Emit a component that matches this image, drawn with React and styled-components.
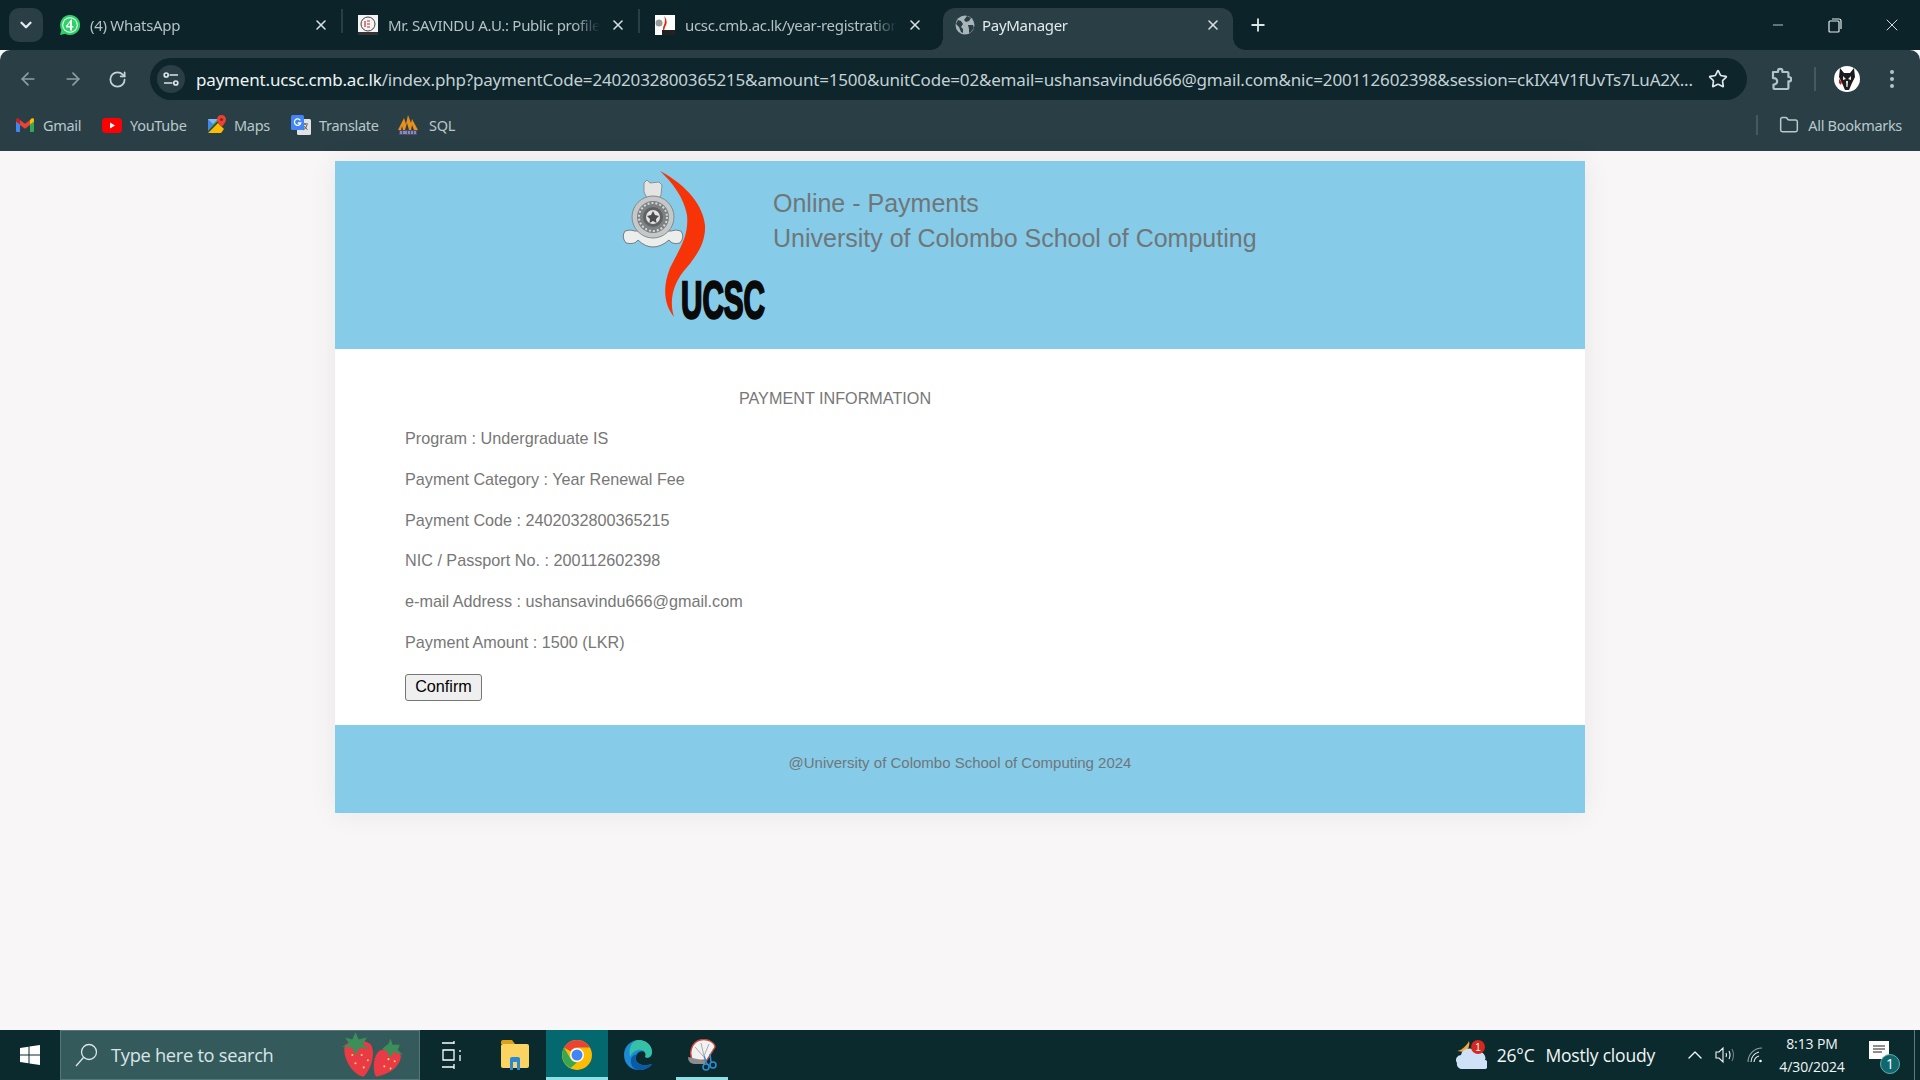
import React from "react";
import styled, { createGlobalStyle } from "styled-components";
import {
  ArrowLeft,
  ArrowRight,
  RotateCw,
  Star,
  Folder,
  X,
  Plus,
  ChevronDown,
  Minus,
  ChevronUp,
} from "lucide-react";

const GlobalStyle = createGlobalStyle`
  html, body { margin: 0; padding: 0; height: 100%; }
  body { background: #f8f6f7; overflow: hidden; }
  #root { height: 100%; }
`;

const uiFont = `"Noto Sans", "Open Sans", sans-serif`;
const pageFont = `"Liberation Sans", Arial, sans-serif`;

// ===== browser chrome =====
const Screen = styled.div`
  width: 1920px;
  height: 1080px;
  display: flex;
  flex-direction: column;
  font-family: ${pageFont};
`;

const TabStrip = styled.div`
  height: 50px;
  flex: none;
  background: #0b2329;
  display: flex;
  padding-left: 9px;
  color: #c4d0d3;
  font-family: ${uiFont};
`;

const TabMenu = styled.div`
  width: 34px;
  height: 34px;
  margin-top: 8px;
  border-radius: 10px;
  background: #2a3f45;
  color: #e6ecee;
  display: flex;
  align-items: center;
  justify-content: center;
`;

const Tabs = styled.div`
  display: flex;
  margin-left: 3px;
`;

const Tab = styled.div`
  position: relative;
  width: ${(p) => p.$w}px;
  height: 42px;
  margin-top: 8px;
  margin-left: ${(p) => p.$ml || 0}px;
  padding: 0 ${(p) => p.$pr}px 8px ${(p) => p.$pl}px;
  box-sizing: border-box;
  display: flex;
  align-items: center;
  border-radius: 12px 12px 0 0;
  background: ${(p) => (p.$active ? "#2a3f45" : "transparent")};
  color: ${(p) => (p.$active ? "#e3eaec" : "#b4c2c6")};
  &::after {
    content: "";
    display: ${(p) => (p.$sep ? "block" : "none")};
    position: absolute;
    right: 0;
    top: 1px;
    height: 24px;
    width: 2px;
    background: #2a3f45;
  }
`;

const TabFlare = styled.span`
  position: absolute;
  bottom: 0;
  ${(p) => (p.$side === "left" ? "left: -12px" : "right: -12px")};
  width: 12px;
  height: 12px;
  background: radial-gradient(
    circle at ${(p) => (p.$side === "left" ? "0 0" : "100% 0")},
    transparent 11.5px,
    #2a3f45 12px
  );
`;

const TabTitle = styled.span`
  flex: 1;
  margin-left: ${(p) => p.$gap}px;
  font-size: 15px;
  letter-spacing: -0.3px;
  white-space: nowrap;
  overflow: hidden;
  mask-image: linear-gradient(to right, #000 88%, transparent 100%);
`;

const TabClose = styled.span`
  width: 16px;
  margin-left: 10px;
  display: flex;
  justify-content: center;
  color: #d5dfe1;
`;

const NewTab = styled.div`
  width: 20px;
  margin: 8px 0 0 15px;
  height: 34px;
  display: flex;
  align-items: center;
  color: #dfe6e8;
`;

const WindowControls = styled.div`
  margin-left: auto;
  display: flex;
  align-items: center;
  height: 50px;
  color: #e8eeef;
`;

const WindowBtn = styled.div`
  width: 57px;
  display: flex;
  justify-content: center;
`;

const Toolbar = styled.div`
  height: 58px;
  flex: none;
  box-sizing: border-box;
  background: #2a3f45;
  border-radius: 10px 10px 0 0;
  display: flex;
  align-items: flex-start;
  padding: 8px 0 0 18px;
  font-family: ${uiFont};
`;

const NavBtn = styled.div`
  width: ${(p) => p.$w || 45}px;
  height: 42px;
  flex: none;
  display: flex;
  align-items: center;
  color: ${(p) => p.$color || "#8fa0a5"};
`;

const Omnibox = styled.div`
  width: 1597px;
  height: 42px;
  flex: none;
  background: #0e252b;
  border-radius: 21px;
  display: flex;
  align-items: center;
  padding-left: 7px;
  box-sizing: border-box;
`;

const SiteInfo = styled.div`
  width: 28px;
  height: 28px;
  border-radius: 50%;
  background: #2a3f45;
  flex: none;
  display: flex;
  align-items: center;
  justify-content: center;
`;

const Url = styled.div`
  margin-left: 11px;
  width: 1500px;
  font-size: 17px;
  letter-spacing: -0.18px;
  color: #c3d1d5;
  white-space: nowrap;
  b {
    font-weight: 400;
    color: #eef4f5;
  }
`;

const StarWrap = styled.div`
  margin-left: 12px;
  display: flex;
  color: #dfe6e8;
`;

const ToolGroup = styled.div`
  display: flex;
  align-items: center;
  height: 42px;
  margin-left: 21px;
  color: #b0c6cb;
`;

const VDivider = styled.div`
  width: 2px;
  height: ${(p) => p.$h}px;
  margin: 0 ${(p) => p.$mr || 0}px 0 ${(p) => p.$ml || 0}px;
  background: #46595f;
`;

const Avatar = styled.div`
  width: 26px;
  height: 26px;
  border-radius: 50%;
  background: #fff;
  display: flex;
  align-items: center;
  justify-content: center;
  overflow: hidden;
`;

const MoreDots = styled.div`
  display: flex;
  flex-direction: column;
  gap: 3px;
  margin-left: 30px;
  span {
    width: 4px;
    height: 4px;
    border-radius: 50%;
    background: #b0c6cb;
  }
`;

const BookmarksBar = styled.div`
  height: 43px;
  flex: none;
  background: #2a3f45;
  display: flex;
  align-items: flex-start;
  padding: 5px 18px 0 16px;
  box-sizing: border-box;
  font-family: ${uiFont};
  font-size: 14.5px;
  letter-spacing: -0.3px;
  color: #b9c8cc;
`;

const Bookmark = styled.div`
  width: ${(p) => p.$w}px;
  height: 24px;
  flex: none;
  display: flex;
  align-items: center;
  gap: ${(p) => p.$gap}px;
  span { line-height: 24px; }
`;

const AllBookmarks = styled.div`
  margin-left: auto;
  display: flex;
  align-items: center;
  height: 24px;
  gap: 9px;
`;

// ===== page =====
const Viewport = styled.main`
  flex: 1;
  min-height: 0;
  padding-top: 10px;
`;

const Card = styled.div`
  width: 1250px;
  margin: 0 auto;
  background: #fff;
  box-shadow: 0 0 28px rgba(0, 0, 0, 0.07);
`;

const Banner = styled.header`
  height: 188px;
  background: #86cce9;
  display: flex;
  padding-left: 285px;
  box-sizing: border-box;
`;

const BannerLogo = styled.svg`
  width: 150px;
  height: 160px;
  flex: none;
  margin-top: 7px;
`;

const BannerText = styled.div`
  margin: 25px 0 0 3px;
  font-size: 25px;
  line-height: 35px;
  color: #6f7679;
`;

const Content = styled.section`
  height: 376px;
  box-sizing: border-box;
  padding: 40px 0 0 70px;
  color: #777;
  font-size: 16.2px;
`;

const SectionTitle = styled.div`
  width: 860px;
  text-align: center;
  line-height: 18px;
`;

const InfoRow = styled.p`
  margin: 22.8px 0 0;
  line-height: 18px;
  &:first-of-type { margin-top: 22px; }
`;

const ConfirmButton = styled.button`
  display: block;
  width: 77px;
  height: 27px;
  margin-top: 23px;
  padding: 0 0 2px;
  font: 16.2px ${pageFont};
  color: #000;
  background: #efefef;
  border: 1px solid #767676;
  border-radius: 3px;
`;

const PageFooter = styled.footer`
  height: 88px;
  background: #86cce9;
  padding-top: 30px;
  box-sizing: border-box;
  text-align: center;
  font-size: 15px;
  line-height: 16px;
  color: #6f7679;
`;

// ===== windows taskbar =====
const Taskbar = styled.div`
  height: 50px;
  flex: none;
  background: #0a2a2e;
  display: flex;
  align-items: stretch;
  color: #f2f6f6;
  font-family: "Open Sans", "Noto Sans", sans-serif;
`;

const StartBtn = styled.div`
  width: 60px;
  display: flex;
  align-items: center;
  justify-content: center;
`;

const SearchBox = styled.div`
  width: 360px;
  box-sizing: border-box;
  background: #355a5c;
  border: 1px solid #55777a;
  display: flex;
  align-items: center;
  padding: 0 13px 0 13px;
  font-size: 18.3px;
  letter-spacing: -0.3px;
  color: #d8e6e8;
  overflow: hidden;
`;

const SearchText = styled.span`
  margin-left: 13px;
  margin-bottom: 1px;
  flex: 1;
`;

const TaskIcon = styled.div`
  width: ${(p) => p.$w || 62}px;
  margin-left: ${(p) => p.$ml || 0}px;
  flex: none;
  display: flex;
  align-items: center;
  justify-content: center;
  box-sizing: border-box;
  background: ${(p) => (p.$focus ? "#03696f" : "transparent")};
  border-bottom: ${(p) => (p.$open ? "3px solid #8fdfe6" : "0")};
  padding-top: ${(p) => (p.$open ? "3px" : "0")};
`;

const Tray = styled.div`
  margin-left: auto;
  display: flex;
  align-items: center;
  padding-right: 5px;
`;

const Weather = styled.div`
  display: flex;
  align-items: center;
  font-size: 17.5px;
  letter-spacing: -0.2px;
  span { margin-left: 10px; }
  span + span { margin-left: 11px; }
`;

const TrayIcons = styled.div`
  display: flex;
  align-items: center;
  gap: 12px;
  margin-left: 28px;
`;

const TrayChevron = styled(ChevronUp)`
  margin-right: -4px;
`;

const Clock = styled.div`
  width: 70px;
  margin-left: 14px;
  text-align: center;
  font-size: 14px;
  line-height: 23px;
  letter-spacing: -0.1px;
`;

const Notify = styled.div`
  position: relative;
  width: 30px;
  height: 30px;
  margin: 2px 0 0 22px;
`;

const NotifyBadge = styled.span`
  position: absolute;
  right: -1px;
  bottom: -3px;
  width: 20px;
  height: 20px;
  border-radius: 50%;
  background: #10686f;
  border: 1px solid #6aa;
  box-sizing: border-box;
  font-size: 14px;
  line-height: 18px;
  text-align: center;
  color: #fff;
`;

const ShowDesktop = styled.div`
  width: 1px;
  height: 50px;
  margin-left: 15px;
  background: #5d7a7c;
`;

// ===== drawings =====
const WhatsappIcon = () => (
  <svg width="20" height="20" viewBox="0 0 20 20">
    <path d="M10 0a10 10 0 0 0-8.600 15L0 20l5.200-1.300A10 10 0 1 0 10 0z" fill="#2bd366" />
    <circle cx="10" cy="10" r="7.800" fill="#fff" />
    <circle cx="10" cy="10" r="6.800" fill="#2bd366" />
    <path d="M11 4.500l-5 6.500v1.500h4V15.500h2v-3h1.300V11H12V4.500zM10 7.500V11H7.600z" fill="#fff" fillRule="evenodd" />
  </svg>
);

const ProfileFavicon = () => (
  <svg width="20" height="20" viewBox="0 0 20 20">
    <rect width="20" height="20" fill="#f4f4f4" />
    <circle cx="10" cy="9" r="7" fill="none" stroke="#444" strokeWidth="1" />
    <path d="M7 6v6M9 6h3M9 9h3M9 12h3" stroke="#b33" strokeWidth="1.200" />
    <rect y="17" width="20" height="3" fill="#333" />
  </svg>
);

const UcscFavicon = () => (
  <svg width="20" height="20" viewBox="0 0 20 20">
    <rect width="20" height="20" fill="#fff" />
    <circle cx="4" cy="8" r="3.500" fill="#999" />
    <path d="M9 1q4 4 2 9q-2 3-2 9q-2-6 0-9q2-5 0-9z" fill="#e3260c" />
    <rect x="7" y="15" width="13" height="5" fill="#222" />
  </svg>
);

const GlobeIcon = () => (
  <svg width="20" height="20" viewBox="0 0 20 20">
    <circle cx="10" cy="10" r="9.500" fill="#a9b5b8" />
    <path d="M3 5l3 1 2 3-2 3 2 2v4l-2-1-2-5-3-3zM12 1l4 2-2 3-3 1-2-2zM13 10l5 0 1 3-3 4-2 1 0-4z" fill="#2a3f45" />
  </svg>
);

const TuneIcon = () => (
  <svg width="18" height="18" viewBox="0 0 18 18" fill="none" stroke="#dbe4e6" strokeWidth="1.700">
    <path d="M7.500 5H16M2 13h8.500" />
    <circle cx="4.200" cy="5" r="2" />
    <circle cx="13.800" cy="13" r="2" />
  </svg>
);

const PuzzleIcon = () => (
  <svg width="24" height="24" viewBox="0 0 24 24" fill="none" stroke="currentColor" strokeWidth="2.200" strokeLinejoin="round">
    <path d="M5 5h5V4a2.200 2.200 0 0 1 4.400 0v1h5a1 1 0 0 1 1 1v4h.6a2.200 2.200 0 0 1 0 4.400H20.400V21a1 1 0 0 1-1 1H6.500a1 1 0 0 1-1-1v-3.500h.5a3.200 3.200 0 0 0 0-6.400H5z" />
  </svg>
);

const GmailIcon = () => (
  <svg width="18" height="14" viewBox="0 0 18 14">
    <path d="M0 2.500V13a1 1 0 0 0 1 1h3V6z" fill="#4285f4" />
    <path d="M14 6v8h3a1 1 0 0 0 1-1V2.500z" fill="#34a853" />
    <path d="M0 1.500v2L4 6.500V2L2.500.6C1.500-.2 0 .3 0 1.500z" fill="#c5221f" />
    <path d="M4 2v5l5 3.800L14 7V2L9 5.800z" fill="#ea4335" />
    <path d="M14 2v4.500l4-3v-2c0-1.200-1.500-1.700-2.500-.9z" fill="#fbbc04" />
  </svg>
);

const YoutubeIcon = () => (
  <svg width="20" height="15" viewBox="0 0 20 15">
    <rect width="20" height="15" rx="4" fill="#f00" />
    <path d="M8 4.500v6l5-3z" fill="#fff" />
  </svg>
);

const MapsIcon = () => (
  <svg width="18" height="20" viewBox="0 0 18 20">
    <path d="M0 4h12L0 16z" fill="#34a853" />
    <path d="M0 4l5 5-5 7z" fill="#4285f4" />
    <path d="M0 18L10 8l6 6-3 4z" fill="#fbbc04" />
    <path d="M0 4h10L5 9z" fill="#8ab4f8" />
    <path d="M13.500 0a4.500 4.500 0 0 0-4.500 4.500c0 3 4.500 7.500 4.500 7.500S18 7.500 18 4.500A4.500 4.500 0 0 0 13.500 0z" fill="#ea4335" />
    <circle cx="13.500" cy="4.500" r="1.600" fill="#a01c14" />
  </svg>
);

const TranslateIcon = () => (
  <svg width="20" height="20" viewBox="0 0 20 20">
    <rect x="6" y="4" width="14" height="16" rx="1.500" fill="#dfe3e6" />
    <path d="M11 9h6M14 8v2M12 15q3-1 4-5M12.500 10.500q2 3 4 4" stroke="#555" strokeWidth="1" fill="none" />
    <rect width="13" height="15" rx="1.500" fill="#4285f4" />
    <path d="M9.300 5.300A3.200 3.200 0 1 0 9.700 8H6.800" stroke="#fff" strokeWidth="1.300" fill="none" />
  </svg>
);

const SqlIcon = () => (
  <svg width="20" height="20" viewBox="0 0 20 20">
    <path d="M0 15L6 3l2 6 2-9 3 8 1-4 6 11h-4l-2-5-1 5h-2l-2-7-2 7H5l-1-4-1 4z" fill="#e98f1f" />
    <rect x="1" y="15" width="18" height="5" fill="#4b4b7a" />
    <path d="M3 16v3M6 16v3M8 16v3M11 16v3M14 16v3M17 16v3" stroke="#c9c9dd" strokeWidth="1" />
  </svg>
);

const WolfAvatar = () => (
  <svg width="26" height="26" viewBox="0 0 26 26">
    <path d="M6 2l4 5h6l4-5 1 9-3 6-3 7h-4l-3-7-3-6z" fill="#1c1c1e" />
    <path d="M9 10l3 3-3 1zM17 10l-3 3 3 1zM12 15h2l-.4 6h-1.200z" fill="#e8e8e8" />
    <path d="M5 13l3 3-1 3-2-2z" fill="#b3262a" />
  </svg>
);

const UcscLogo = () => (
  <BannerLogo viewBox="0 0 150 160">
    {/* crest */}
    <path d="M24 24l0-9 3-3 3 3 9-1 3 3-1 10-2 3H27z" fill="#e4e5e3" stroke="#858a8c" strokeWidth="0.900" />
    <path d="M5 63q-4 6 1 12 9 2 12-3 7 7 15 7t16-7q3 5 11 3 5-6 1-12-5-2-10 0H15q-5-2-10 0z" fill="#eceeeb" stroke="#777c7f" strokeWidth="1" />
    <circle cx="33" cy="49" r="21" fill="#c5c8c8" stroke="#858a8c" strokeWidth="1" />
    <circle cx="33" cy="49" r="16" fill="#7d8183" />
    <circle cx="33" cy="49" r="14" fill="none" stroke="#d6d8d8" strokeWidth="2" strokeDasharray="2 2" />
    <circle cx="33" cy="49" r="10" fill="#5e6264" />
    <circle cx="33" cy="49" r="7" fill="#e3e4e3" />
    <path d="M33 43l2 4 4 1-3 3 .5 4-3.500-2-3.500 2 .5-4-3-3 4-1z" fill="#494d4f" />
    {/* flame */}
    <path d="M40 3C68 18 83 38 85 57 86 76 75 90 63 104 53 117 49 133 54 149 43 135 43 118 50 100 60 80 69 68 67 47 64 30 53 15 40 3z" fill="#f63408" />
    <text x="61" y="150" fontFamily={pageFont} fontWeight="700" fontSize="52" textLength="84" lengthAdjust="spacingAndGlyphs" stroke="#0a0a0a" strokeWidth="2.400" fill="#0a0a0a">UCSC</text>
  </BannerLogo>
);

const WinLogo = () => (
  <svg width="20" height="20" viewBox="0 0 20 20" fill="#fff">
    <path d="M0 3l8.500-1.200v7.700H0zM9.500 1.600L20 0v9.500H9.500zM0 10.500h8.500v7.700L0 17zM9.500 10.500H20V20L9.500 18.400z" />
  </svg>
);

const SearchGlass = () => (
  <svg width="24" height="24" viewBox="0 0 24 24" fill="none" stroke="#d8e6e8" strokeWidth="1.300">
    <circle cx="15" cy="9" r="7.500" />
    <path d="M9.500 14.500L2 23" />
  </svg>
);

const Strawberries = () => (
  <svg width="66" height="46" viewBox="0 0 64 44">
    <path d="M5 12c8-5 24-5 26 2 3 9-1 22-8 29C13 42 1 24 5 12z" fill="#ea3a45" />
    <path d="M38 18c8-4 20-1 21 5 0 8-8 17-24 20-3-4-4-19 3-25z" fill="#ea3a45" />
    <path d="M2 14l7-3-4-6 7 2 3-7 3 7 8-2-4 7 7 4-10-1-4 7-3-7z" fill="#3d8f5a" />
    <path d="M41 16l6-5 2-5 2 6 7 0-2 5 5 5-9-3-4 6-2-6z" fill="#3d8f5a" />
    <g fill="#f3d65a">
      <circle cx="12" cy="22" r="1" /><circle cx="21" cy="22" r="1" /><circle cx="27" cy="27" r="1" />
      <circle cx="15" cy="30" r="1" /><circle cx="23" cy="34" r="1" /><circle cx="47" cy="26" r="1" />
      <circle cx="53" cy="28" r="1" /><circle cx="43" cy="33" r="1" /><circle cx="49" cy="35" r="1" />
    </g>
  </svg>
);

const TaskViewIcon = () => (
  <svg width="20" height="28" viewBox="0 0 20 28" fill="none" stroke="#fff" strokeWidth="1.300">
    <path d="M0 2h12M12 0v3M0 26h12M12 23v5M1 9h11v10H1zM18 9v2M18 14v6" />
  </svg>
);

const ExplorerIcon = () => (
  <svg width="28" height="30" viewBox="0 0 28 30">
    <path d="M0 2a2 2 0 0 1 2-2h9l3 4H0z" fill="#dba11b" />
    <rect y="4" width="28" height="24" rx="2" fill="#fcd462" />
    <path d="M9 30V19a2 2 0 0 1 2-2h6a2 2 0 0 1 2 2v11h-3v-8h-4v8z" fill="#2b88d8" />
  </svg>
);

const ChromeIcon = () => (
  <svg width="30" height="30" viewBox="0 0 30 30">
    <circle cx="15" cy="15" r="15" fill="#fbbc04" />
    <path d="M15 0a15 15 0 0 1 13 7.500H15a7.500 7.500 0 0 0-6.500 3.750L2 7.500A15 15 0 0 1 15 0z" fill="#ea4335" />
    <path d="M2 7.500l6.500 11.250A7.500 7.500 0 0 0 15 22.500L8.500 28A15 15 0 0 1 2 7.500z" fill="#34a853" />
    <circle cx="15" cy="15" r="7" fill="#fff" />
    <circle cx="15" cy="15" r="5.500" fill="#4285f4" />
  </svg>
);

const EdgeIcon = () => (
  <svg width="30" height="30" viewBox="0 0 30 30">
    <path d="M15 0C6 0 0 7 0 15c0 9 7 15 15 15 5 0 10-2 13-6-5 2-14 2-16-4-1-3 0-6 3-8 4-2 8 0 8 3 0 1-1 2-2 2 4 2 7-1 7-5C28 5 22 0 15 0z" fill="#1b8bd6" />
    <path d="M15 0C22 0 28 5 28 12c0 4-3 7-7 5 2-4-2-8-7-7-4 1-7 4-8 7C4 8 8 0 15 0z" fill="#35c1a5" />
    <path d="M12 20c2 6 11 6 16 4-3 4-8 6-13 6-6 0-9-6-8-11 1-3 4-5 6-4-2 1-2 3-1 5z" fill="#0c59a4" />
  </svg>
);

const SnipIcon = () => (
  <svg width="30" height="32" viewBox="0 0 30 32">
    <path d="M6 22C1 14 5 3 13 1c8-2 15 3 15 7L20 21z" fill="#f2f2f2" stroke="#d0453a" strokeWidth="1.400" />
    <path d="M1 18l18 4-1 3H7q-6-1-6-7z" fill="#8d8d8d" />
    <path d="M14 4l3 13M8 8l8 9M22 5l-5 12" stroke="#aaa" strokeWidth="1" />
    <path d="M17 17l3 8M23 15l1 8" stroke="#2c8fd6" strokeWidth="1.500" />
    <circle cx="19" cy="28" r="3" fill="none" stroke="#2c8fd6" strokeWidth="1.500" />
    <circle cx="26" cy="26" r="3" fill="none" stroke="#2c8fd6" strokeWidth="1.500" />
  </svg>
);

const WeatherIcon = () => (
  <svg width="32" height="30" viewBox="0 0 32 30">
    <path d="M14 1a9 9 0 0 1-5 11l-7-1c3 0 9-4 12-10z" fill="#f2a93b" />
    <path d="M2 23a5 5 0 0 1 4-8 8 8 0 0 1 15-2 6 6 0 0 1 9 7 4 4 0 0 1-2 9H6a5 5 0 0 1-4-6z" fill="#cfe1f7" />
    <circle cx="23" cy="7" r="7" fill="#d5281e" />
    <text x="23" y="11" fontSize="10" fill="#fff" textAnchor="middle" fontFamily={pageFont}>1</text>
  </svg>
);

const SpeakerIcon = () => (
  <svg width="20" height="18" viewBox="0 0 20 18" fill="none" stroke="#f2f6f6" strokeWidth="1.100">
    <path d="M1 6h3l4-4v14l-4-4H1zM11 7q1 2 0 4M14 5q2 4 0 8" />
    <path d="M17 3q3 6 0 12" stroke="#6b8385" />
  </svg>
);

const WifiIcon = () => (
  <svg width="16" height="16" viewBox="0 0 16 16" fill="none" stroke="#e8eeee" strokeWidth="1.100">
    <path d="M1 15A14 14 0 0 1 15 1" stroke="#8fa3a5" />
    <path d="M4 15A11 11 0 0 1 12 5" />
    <path d="M7 15A7 7 0 0 1 12 9" />
    <circle cx="13.500" cy="14" r="1.300" fill="#f2f6f6" stroke="none" />
  </svg>
);

const NotifyIcon = () => (
  <svg width="20" height="18" viewBox="0 0 20 18">
    <rect width="20" height="18" fill="#fff" />
    <path d="M4 5h12M4 8h12M4 11h9" stroke="#1c1c1c" strokeWidth="1" />
  </svg>
);

const RestoreIcon = () => (
  <svg width="14" height="15" viewBox="0 0 14 15" fill="none" stroke="currentColor" strokeWidth="1.200">
    <rect x="1" y="3" width="10" height="11" rx="1" />
    <path d="M4 1h7a2 2 0 0 1 2 2v8" />
  </svg>
);

const tabs = [
  { title: "(4) WhatsApp", icon: <WhatsappIcon />, pl: 14, sep: true },
  { title: "Mr. SAVINDU A.U.: Public profile", icon: <ProfileFavicon />, pl: 15, sep: true },
  { title: "ucsc.cmb.ac.lk/year-registration", icon: <UcscFavicon />, pl: 15 },
];

const bookmarks = [
  { label: "Gmail", icon: <GmailIcon />, w: 86, gap: 9 },
  { label: "YouTube", icon: <YoutubeIcon />, w: 106, gap: 8 },
  { label: "Maps", icon: <MapsIcon />, w: 83, gap: 8 },
  { label: "Translate", icon: <TranslateIcon />, w: 107, gap: 8 },
  { label: "SQL", icon: <SqlIcon />, w: 60, gap: 11 },
];

const info = [
  "Program : Undergraduate IS",
  "Payment Category : Year Renewal Fee",
  "Payment Code : 2402032800365215",
  "NIC / Passport No. : 200112602398",
  "e-mail Address : ushansavindu666@gmail.com",
  "Payment Amount : 1500 (LKR)",
];

const App = () => {
  return (
    <Screen>
      <GlobalStyle />
      <TabStrip>
        <TabMenu>
          <ChevronDown size={18} strokeWidth={3} />
        </TabMenu>
        <Tabs>
          {tabs.map((t) => (
            <Tab key={t.title} $w={297} $pl={t.pl} $pr={14} $sep={t.sep}>
              {t.icon}
              <TabTitle $gap={10}>{t.title}</TabTitle>
              <TabClose>
                <X size={16} strokeWidth={2.4} />
              </TabClose>
            </Tab>
          ))}
          <Tab $w={290} $pl={12} $pr={12} $ml={6} $active>
            <TabFlare $side="left" />
            <GlobeIcon />
            <TabTitle $gap={7}>PayManager</TabTitle>
            <TabClose>
              <X size={16} strokeWidth={2.4} />
            </TabClose>
            <TabFlare $side="right" />
          </Tab>
        </Tabs>
        <NewTab>
          <Plus size={20} strokeWidth={2.2} />
        </NewTab>
        <WindowControls>
          <WindowBtn>
            <Minus size={16} strokeWidth={1.2} />
          </WindowBtn>
          <WindowBtn>
            <RestoreIcon />
          </WindowBtn>
          <WindowBtn>
            <X size={20} strokeWidth={1.1} />
          </WindowBtn>
        </WindowControls>
      </TabStrip>

      <Toolbar>
        <NavBtn>
          <ArrowLeft size={20} strokeWidth={2} />
        </NavBtn>
        <NavBtn>
          <ArrowRight size={20} strokeWidth={2} />
        </NavBtn>
        <NavBtn $w={42} $color="#c6d4d8">
          <RotateCw size={19} strokeWidth={2.2} />
        </NavBtn>
        <Omnibox>
          <SiteInfo>
            <TuneIcon />
          </SiteInfo>
          <Url>
            <b>payment.ucsc.cmb.ac.lk</b>
            /index.php?paymentCode=2402032800365215&amp;amount=1500&amp;unitCode=02&amp;email=ushansavindu666@gmail.com&amp;nic=200112602398&amp;session=ckIX4V1fUvTs7LuA2X...
          </Url>
          <StarWrap>
            <Star size={20} strokeWidth={2} />
          </StarWrap>
        </Omnibox>
        <ToolGroup>
          <PuzzleIcon />
          <VDivider $h={24} $ml={22} $mr={18} />
          <Avatar>
            <WolfAvatar />
          </Avatar>
          <MoreDots>
            <span />
            <span />
            <span />
          </MoreDots>
        </ToolGroup>
      </Toolbar>

      <BookmarksBar>
        {bookmarks.map((b) => (
          <Bookmark key={b.label} $w={b.w} $gap={b.gap}>
            {b.icon}
            <span>{b.label}</span>
          </Bookmark>
        ))}
        <AllBookmarks>
          <VDivider $h={20} $mr={12} />
          <Folder size={20} strokeWidth={1.8} />
          <span>All Bookmarks</span>
        </AllBookmarks>
      </BookmarksBar>

      <Viewport>
        <Card>
          <Banner>
            <UcscLogo />
            <BannerText>
              Online - Payments
              <br />
              University of Colombo School of Computing
            </BannerText>
          </Banner>
          <Content>
            <SectionTitle>PAYMENT INFORMATION</SectionTitle>
            {info.map((line) => (
              <InfoRow key={line}>{line}</InfoRow>
            ))}
            <ConfirmButton>Confirm</ConfirmButton>
          </Content>
          <PageFooter>@University of Colombo School of Computing 2024</PageFooter>
        </Card>
      </Viewport>

      <Taskbar>
        <StartBtn>
          <WinLogo />
        </StartBtn>
        <SearchBox>
          <SearchGlass />
          <SearchText>Type here to search</SearchText>
          <Strawberries />
        </SearchBox>
        <TaskIcon $w={64}>
          <TaskViewIcon />
        </TaskIcon>
        <TaskIcon>
          <ExplorerIcon />
        </TaskIcon>
        <TaskIcon $focus $open>
          <ChromeIcon />
        </TaskIcon>
        <TaskIcon>
          <EdgeIcon />
        </TaskIcon>
        <TaskIcon $open $w={52} $ml={6}>
          <SnipIcon />
        </TaskIcon>
        <Tray>
          <Weather>
            <WeatherIcon />
            <span>26°C</span>
            <span>Mostly cloudy</span>
          </Weather>
          <TrayIcons>
            <TrayChevron size={24} strokeWidth={1.4} />
            <SpeakerIcon />
            <WifiIcon />
          </TrayIcons>
          <Clock>
            8:13 PM
            <br />
            4/30/2024
          </Clock>
          <Notify>
            <NotifyIcon />
            <NotifyBadge>1</NotifyBadge>
          </Notify>
          <ShowDesktop />
        </Tray>
      </Taskbar>
    </Screen>
  );
};

export default App;
